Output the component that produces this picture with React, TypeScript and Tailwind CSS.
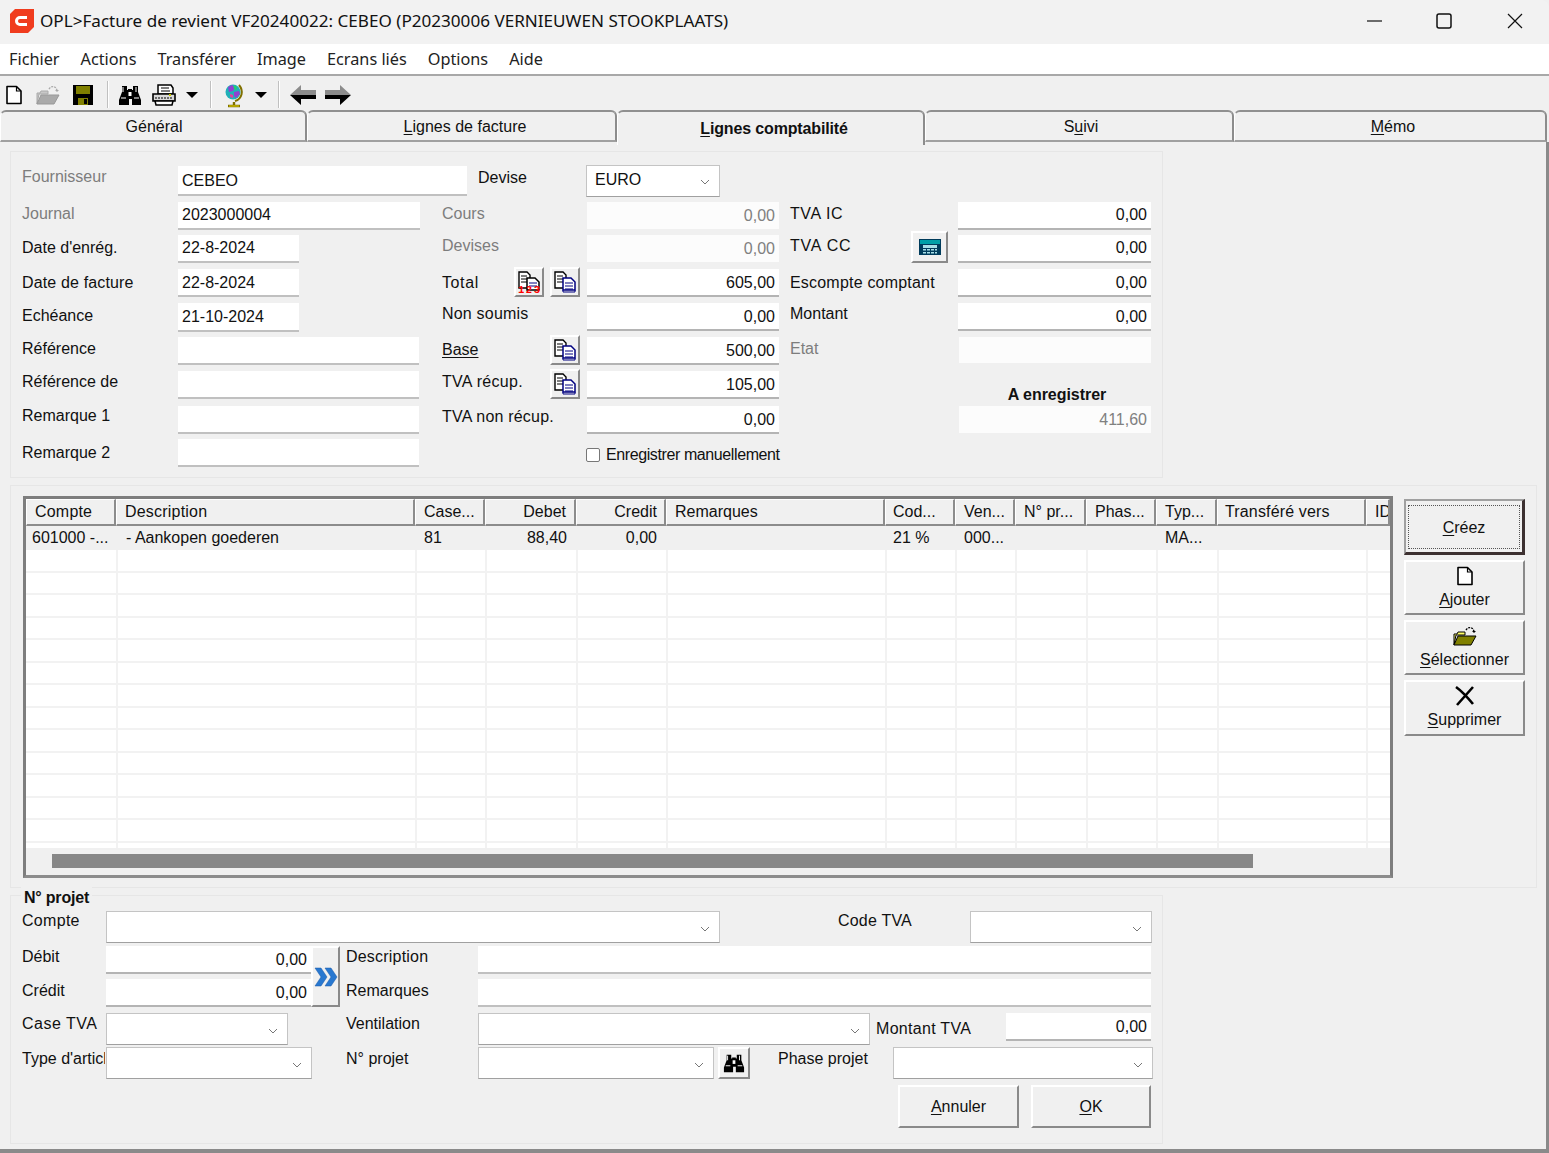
import React from 'react';

const raised = 'border-t-2 border-l-2 border-r-2 border-b-2 border-t-white border-l-white border-r-[#8a8a8a] border-b-[#8a8a8a] bg-[#f0f0f0]';

function U({ children }: { children: React.ReactNode }) {
  return <span className="underline underline-offset-2">{children}</span>;
}

function Input({ value, className = '', disabled }: { value?: string; className?: string; disabled?: boolean }) {
  return (
    <div className={`flex items-center justify-end px-1 shrink-0 ${disabled ? 'bg-[#fcfcfc] text-[#808080]' : 'bg-white border-b-2 border-b-[#b4b4b4]'} ${className}`}>
      {value}
    </div>
  );
}

function TextInput({ value, className = '' }: { value?: string; className?: string }) {
  return <div className={`flex items-center pl-1 bg-white border-b-2 border-b-[#c0c0c0] shrink-0 ${className}`}>{value}</div>;
}

function Combo({ value, className = '' }: { value?: string; className?: string }) {
  return (
    <div className={`flex items-center justify-between bg-white border border-[#c4c4c4] border-b-[#a0a0a0] pl-2 pr-[9px] shrink-0 ${className}`}>
      <span>{value}</span>
      <svg width="10" height="6" viewBox="0 0 10 6" className="mt-1"><path d="M1 1l4 4 4-4" fill="none" stroke="#777" strokeWidth="1" /></svg>
    </div>
  );
}

function Label({ children, className = '', muted }: { children: React.ReactNode; className?: string; muted?: boolean }) {
  return <div className={`shrink-0 leading-[24px] ${muted ? 'text-[#7d7d7d]' : ''} ${className}`}>{children}</div>;
}

function NewDoc({ size = 20 }: { size?: number }) {
  return (
    <svg width={size} height={size} viewBox="0 0 20 20">
      <path d="M3 1.5h9.5l4.5 4.5v12.5H3z" fill="#fff" stroke="#000" strokeWidth="1.6" strokeLinejoin="round" />
      <path d="M12.5 1.5V6H17" fill="none" stroke="#000" strokeWidth="1.2" />
    </svg>
  );
}

function OpenFolder({ active }: { active?: boolean }) {
  return (
    <svg width="26" height="22" viewBox="0 0 26 22">
      <path d="M2 9h3l1-2h7v3h-9L2 20z" fill={active ? '#ffff66' : '#c8c8c8'} stroke={active ? '#000' : '#aaa'} strokeWidth="1" />
      <path d="M2 20l4-9h18l-5 9z" fill={active ? '#808000' : '#aaaaaa'} stroke={active ? '#000' : '#999'} strokeWidth="1" />
      <path d="M14 5c2-3 5-3 7-1l1 2" fill="none" stroke={active ? '#000' : '#aaa'} strokeWidth="1.4" strokeDasharray="2 1" />
      <path d="M20 6h4l-2 2z" fill={active ? '#000' : '#aaa'} />
    </svg>
  );
}

function Floppy() {
  return (
    <svg width="22" height="22" viewBox="0 0 22 22">
      <path d="M1 1h20v20H1z" fill="#000" />
      <path d="M4 2h14v8H4z" fill="#808000" />
      <path d="M6 14h10v7H6z" fill="#808000" />
      <path d="M12 15h3v5h-3z" fill="#000" />
    </svg>
  );
}

function Binoculars({ size = 24 }: { size?: number }) {
  return (
    <svg width={size} height={size} viewBox="0 0 24 24">
      <path d="M4 3h5v4h1v-1h4v1h1V3h5v6l3 8v5h-9v-6h-3v6H1v-5l3-8z" fill="#000" />
      <path d="M5 4v5M18 4v5M3 15h5M16 15h5" stroke="#fff" strokeWidth="1" />
      <path d="M10.5 9h3v4h-3z" fill="#fff" />
    </svg>
  );
}

function Printer() {
  return (
    <svg width="26" height="24" viewBox="0 0 26 24">
      <path d="M7 2h13l2 3v6H7z" fill="#fff" stroke="#000" strokeWidth="1.5" />
      <path d="M10 5h8M10 8h9" stroke="#000" strokeWidth="1.2" />
      <path d="M2 11h22v7H2z" fill="#d8d8d8" stroke="#000" strokeWidth="1.6" />
      <path d="M4 15h18" stroke="#000" strokeWidth="1.2" strokeDasharray="2 1" />
      <path d="M4 18h18l-1 4H5z" fill="#fff" stroke="#000" strokeWidth="1.5" />
      <path d="M18 12h2" stroke="#c8c800" strokeWidth="2" />
    </svg>
  );
}

function Caret() {
  return <svg width="12" height="6" viewBox="0 0 12 6"><path d="M0 0h12L6 6z" fill="#000" /></svg>;
}

function Globe() {
  return (
    <svg width="20" height="26" viewBox="0 0 20 26">
      <path d="M15 3c5 6 3 14-4 16" fill="none" stroke="#807000" strokeWidth="2" />
      <path d="M10 20v3M4 24h12" stroke="#807000" strokeWidth="2.4" />
      <path d="M5 24h10" stroke="#e8d800" strokeWidth="1" />
      <circle cx="9" cy="10" r="7.5" fill="#20b0b8" />
      <path d="M4 5l4-2 3 2-2 4-4 1zM10 10l5-1 1 3-4 4-2-2z" fill="#9040d0" />
      <path d="M6 12l3 1 0 3-3-1z" fill="#e040a0" />
      <path d="M9 4l3 0 1 3-2 1z" fill="#20d070" />
    </svg>
  );
}

function Arrow({ flip }: { flip?: boolean }) {
  return (
    <svg width="26" height="22" viewBox="0 0 26 22" className={flip ? '-scale-x-100' : ''}>
      <path d="M0 11L11 1v5h15v5z" fill="#8c8c8c" />
      <path d="M0 11L11 21v-6h15v-4z" fill="#000" />
    </svg>
  );
}

function Sep({ className = '' }: { className?: string }) {
  return <div className={`w-[2px] h-[27px] bg-[#c0c0c0] border-r border-white shrink-0 ${className}`} />;
}

function CopyIcon({ numbers }: { numbers?: boolean }) {
  return (
    <svg width="24" height="24" viewBox="0 0 24 24">
      <path d="M2 2h8l3 3v13H2z" fill="#fff" stroke="#000" strokeWidth="1.4" />
      <path d="M4 6h6M4 9h6M4 12h6" stroke="#000" strokeWidth="1" />
      <path d="M10 8h8l4 4v8H10z" fill="#fff" stroke={numbers ? '#000' : '#000080'} strokeWidth="1.5" />
      <path d="M12 13h8M12 16h8" stroke="#000080" strokeWidth="1" />
      {numbers
        ? <text x="1" y="23" fontSize="10.500" fontWeight="700" fill="#ff0000" fontFamily="'Liberation Mono', monospace" textLength="22" lengthAdjust="spacing">123</text>
        : <path d="M10 20v2h12v-2M12 19h8" fill="none" stroke="#000080" strokeWidth="1" />}
    </svg>
  );
}

function IconButton({ children, className = '' }: { children: React.ReactNode; className?: string }) {
  return <div className={`flex items-center justify-center shrink-0 ${raised} ${className}`}>{children}</div>;
}

function Calculator() {
  return (
    <svg width="24" height="18" viewBox="0 0 24 18">
      <path d="M1 1h22v16H1z" fill="#003c5c" />
      <path d="M2 2h20v4H2z" fill="#00a0a8" />
      <path d="M5 7h14v3H5z" fill="#a8e0e8" />
      <path d="M5 11h3v1.500H5zM9 11h3v1.500H9zM13 11h3v1.500h-3zM17 11h2v1.500h-2zM5 14h3v1.500H5zM9 14h3v1.500H9zM13 14h3v1.500h-3zM17 14h2v1.500h-2z" fill="#a8e0e8" />
    </svg>
  );
}

function SideButton({ icon, label, className = '' }: { icon?: React.ReactNode; label: React.ReactNode; className?: string }) {
  return (
    <div className={`flex flex-col items-center justify-center w-[121px] pt-[2px] shrink-0 ${raised} ${className}`}>
      {icon && <div className="h-[22px] -mt-[1px] flex items-center justify-center">{icon}</div>}
      <div className="leading-[24px] mt-[1px]">{label}</div>
    </div>
  );
}

const cols = [
  { w: 'w-[90px]', t: 'Compte', c: '601000 -...', cell: 'pl-[4px]', head: 'pl-[8px] tracking-[0.2px]' },
  { w: 'w-[299px]', t: 'Description', c: '- Aankopen goederen', cell: 'pl-[8px]', head: 'pl-[8px] tracking-[0.2px]' },
  { w: 'w-[70px]', t: 'Case...', c: '81', cell: 'pl-[7px]', head: 'pl-[8px]' },
  { w: 'w-[91px]', t: 'Debet', c: '88,40', cell: 'text-right pr-[11px]', head: 'text-right pr-[8px]' },
  { w: 'w-[90px]', t: 'Credit', c: '0,00', cell: 'text-right pr-[11px]', head: 'text-right pr-[7px]' },
  { w: 'w-[219px]', t: 'Remarques', c: '', cell: '', head: 'pl-[8px]' },
  { w: 'w-[70px]', t: 'Cod...', c: '21 %', cell: 'pl-[6px]', head: 'pl-[7px]' },
  { w: 'w-[60px]', t: 'Ven...', c: '000...', cell: 'pl-[7px]', head: 'pl-[8px]' },
  { w: 'w-[71px]', t: 'N° pr...', c: '', cell: '', head: 'pl-[8px]' },
  { w: 'w-[70px]', t: 'Phas...', c: '', cell: '', head: 'pl-[8px]' },
  { w: 'w-[61px]', t: 'Typ...', c: 'MA...', cell: 'pl-[7px]', head: 'pl-[8px]' },
  { w: 'w-[149px]', t: 'Transféré vers', c: '', cell: '', head: 'pl-[7px] tracking-[0.15px]' },
  { w: 'w-[24px]', t: 'ID', c: '', cell: '', head: 'pl-[8px]' },
];

const tabs = [
  { k: 'g', w: 'w-[307px]', pad: 'pl-[2px] pt-[1px]', label: <>Général</> },
  { k: 'l', w: 'w-[310px]', pad: 'pl-[7px] pt-[1px]', label: <><U>L</U>ignes de facture</> },
  { k: 'c', w: 'w-[308px]', pad: 'pl-[7px]', label: <><U>L</U>ignes comptabilité</>, active: true },
  { k: 's', w: 'w-[309px]', pad: 'pl-[4px] pt-[1px]', label: <>S<U>u</U>ivi</> },
  { k: 'm', w: 'w-[313px]', pad: 'pl-[6px] pt-[1px]', label: <><U>M</U>émo</> },
];

const emptyRows = Array.from({ length: 13 }, (_, i) => i);

export default function App() {
  return (
    <div className="w-[1549px] h-[1153px] overflow-hidden bg-[#f0f0f0] text-[16px] text-[#111] font-['Liberation_Sans',Arial,sans-serif] flex flex-col">
      {/* title bar */}
      <div className="h-[44px] shrink-0 flex items-center pb-[2px] bg-[#f2f2f2] rounded-tr-[8px] font-['Noto_Sans',sans-serif] text-[17.1px]">
        <svg width="24" height="24" viewBox="0 0 24 24" className="ml-[10px] mr-[6px] shrink-0">
          <path d="M5 0h19v18l-6 6H0V5z" fill="#f03c1e" />
          <path d="M17 8.500H10a3.500 3.500 0 000 7h7" fill="none" stroke="#fff" strokeWidth="3" />
        </svg>
        <span className="whitespace-nowrap">OPL&gt;Facture de revient VF20240022: CEBEO (P20230006 VERNIEUWEN STOOKPLAATS)</span>
        <div className="ml-auto flex items-center">
          <svg width="16" height="16" viewBox="0 0 16 16" className="mr-[53px]"><path d="M0 8h15" stroke="#111" strokeWidth="1.2" /></svg>
          <svg width="16" height="16" viewBox="0 0 16 16" className="mr-[55px]"><rect x="1" y="1" width="14" height="14" rx="2" fill="none" stroke="#111" strokeWidth="1.5" /></svg>
          <svg width="16" height="16" viewBox="0 0 16 16" className="mr-[26px]"><path d="M1 1l14 14M15 1L1 15" stroke="#111" strokeWidth="1.2" /></svg>
        </div>
      </div>

      {/* menu */}
      <div className="h-[32px] shrink-0 bg-white border-b-2 border-b-[#a8a8a8] flex items-center pt-[1px] pl-[9px] gap-[21px] font-['Noto_Sans',sans-serif] text-[16.25px] text-[#222]">
        {['Fichier', 'Actions', 'Transférer', 'Image', 'Ecrans liés', 'Options', 'Aide'].map(m => <span key={m}>{m}</span>)}
      </div>

      {/* toolbar */}
      <div className="h-[34px] shrink-0 flex items-center pt-[3px]">
        <div className="ml-[4px]"><NewDoc /></div>
        <div className="ml-[11px]"><OpenFolder /></div>
        <div className="ml-[11px]"><Floppy /></div>
        <Sep className="ml-[13px]" />
        <div className="ml-[9px]"><Binoculars /></div>
        <div className="ml-[9px]"><Printer /></div>
        <div className="ml-[9px]"><Caret /></div>
        <Sep className="ml-[12px]" />
        <div className="ml-[12px]"><Globe /></div>
        <div className="ml-[11px]"><Caret /></div>
        <Sep className="ml-[11px]" />
        <div className="ml-[10px]"><Arrow /></div>
        <div className="ml-[9px]"><Arrow flip /></div>
      </div>

      {/* tabs */}
      <div className="h-[35px] shrink-0 flex items-start -mb-[3px] relative z-10">
        {tabs.map(t => (
          <div
            key={t.k}
            className={`${t.w} ${t.pad} shrink-0 flex items-center justify-center border-t-2 border-t-[#909090] border-r-2 border-r-[#8c8c8c] border-l border-l-white rounded-t-[6px] ${t.active ? 'h-[35px] font-bold bg-[#f0f0f0] pt-[1px] tracking-[-0.15px]' : 'h-[32px] border-b-2 border-b-[#a0a0a0]'}`}
          >
            <span>{t.label}</span>
          </div>
        ))}
        <div className="flex-1" />
      </div>

      {/* page */}
      <div className="flex-1 flex flex-col border-r-[3px] border-r-[#8a8a8a] border-b-[4px] border-b-[#8a8a8a] pl-[10px] pr-[9px] pt-[9px] min-h-0">
        {/* upper form */}
        <div className="w-[1153px] h-[327px] shrink-0 border border-[#e6e6e6] pl-[11px] pt-[13px] flex flex-col">
          <div className="flex h-[37px]">
            <Label muted className="w-[156px]">Fournisseur</Label>
            <TextInput value="CEBEO" className="w-[289px] h-[30px] mt-[1px] pt-[2px]" />
            <Label className="w-[108px] ml-[11px] mt-[1px]">Devise</Label>
            <Combo value="EURO" className="w-[134px] h-[32px] pb-[2px]" />
          </div>
          <div className="flex h-[33px]">
            <Label muted className="w-[156px]">Journal</Label>
            <TextInput value="2023000004" className="w-[242px] h-[28px]" />
            <Label muted className="w-[145px] ml-[22px]">Cours</Label>
            <Input disabled value="0,00" className="w-[192px] h-[27px]" />
            <Label className="w-[168px] ml-[11px] tracking-[0.6px]">TVA IC</Label>
            <Input value="0,00" className="w-[193px] h-[28px]" />
          </div>
          <div className="flex h-[34px]">
            <Label className="w-[156px] mt-[1px]">Date d'enrég.</Label>
            <TextInput value="22-8-2024" className="w-[121px] h-[28px] border-b-0" />
            <Label muted className="w-[145px] ml-[143px] -mt-[1px]">Devises</Label>
            <Input disabled value="0,00" className="w-[192px] h-[27px]" />
            <Label className="w-[121px] ml-[11px] -mt-[1px] tracking-[0.8px]">TVA CC</Label>
            <IconButton className="w-[37px] h-[32px] -mt-[4px] mr-[10px]"><Calculator /></IconButton>
            <Input value="0,00" className="w-[193px] h-[28px]" />
          </div>
          <div className="flex h-[34px]">
            <Label className="w-[156px] mt-[2px] tracking-[0.15px]">Date de facture</Label>
            <TextInput value="22-8-2024" className="w-[121px] h-[28px] border-b-0 pt-[2px]" />
            <Label className="w-[72px] ml-[143px] mt-[2px] tracking-[0.6px]">Total</Label>
            <IconButton className="w-[30px] h-[30px] mr-[6px] -mt-[2px]"><CopyIcon numbers /></IconButton>
            <IconButton className="w-[30px] h-[30px] mr-[7px] -mt-[2px]"><CopyIcon /></IconButton>
            <Input value="605,00" className="w-[192px] h-[28px] pt-[2px]" />
            <Label className="w-[168px] ml-[11px] mt-[2px] tracking-[0.2px]">Escompte comptant</Label>
            <Input value="0,00" className="w-[193px] h-[28px] pt-[2px]" />
          </div>
          <div className="flex h-[34px]">
            <Label className="w-[156px] mt-[1px]">Echéance</Label>
            <TextInput value="21-10-2024" className="w-[121px] h-[29px] border-b-0" />
            <Label className="w-[145px] ml-[143px] -mt-[1px] tracking-[0.2px]">Non soumis</Label>
            <Input value="0,00" className="w-[192px] h-[28px] pt-[2px]" />
            <Label className="w-[168px] ml-[11px] -mt-[1px]">Montant</Label>
            <Input value="0,00" className="w-[193px] h-[28px] pt-[2px]" />
          </div>
          <div className="flex h-[34px]">
            <Label className="w-[156px]">Référence</Label>
            <TextInput className="w-[241px] h-[28px]" />
            <Label className="w-[108px] ml-[23px] mt-[1px]"><U>Base</U></Label>
            <IconButton className="w-[30px] h-[30px] mr-[7px] -mt-[2px]"><CopyIcon /></IconButton>
            <Input value="500,00" className="w-[192px] h-[28px] pt-[2px]" />
            <Label muted className="w-[169px] ml-[11px]">Etat</Label>
            <Input disabled className="w-[192px] h-[26px]" />
          </div>
          <div className="flex h-[35px]">
            <Label className="w-[156px] h-[28px] -mt-[1px] overflow-hidden">Référence de<br />réception</Label>
            <TextInput className="w-[241px] h-[28px]" />
            <Label className="w-[108px] ml-[23px] -mt-[1px] tracking-[0.3px]">TVA récup.</Label>
            <IconButton className="w-[30px] h-[30px] mr-[7px] -mt-[2px]"><CopyIcon /></IconButton>
            <Input value="105,00" className="w-[192px] h-[28px] pt-[2px]" />
            <div className="w-[192px] ml-[180px] mt-[12px] pl-[4px] text-center font-bold leading-[24px] shrink-0 tracking-[-0.05px]">A enregistrer</div>
          </div>
          <div className="flex h-[33px]">
            <Label className="w-[156px] -mt-[2px]">Remarque 1</Label>
            <TextInput className="w-[241px] h-[28px]" />
            <Label className="w-[145px] ml-[23px] -mt-[1px] tracking-[0.2px]">TVA non récup.</Label>
            <Input value="0,00" className="w-[192px] h-[28px] pt-[2px]" />
            <Input disabled value="411,60" className="w-[192px] h-[27px] ml-[180px]" />
          </div>
          <div className="flex h-[28px]">
            <Label className="w-[156px] mt-[2px]">Remarque 2</Label>
            <TextInput className="w-[241px] h-[28px]" />
            <div className="ml-[167px] flex items-center gap-[6px] h-[32px] shrink-0 whitespace-nowrap">
              <div className="w-[14px] h-[14px] rounded-[2px] border border-[#777] bg-white shrink-0" />
              <span className="tracking-[-0.4px]">Enregistrer manuellement</span>
            </div>
          </div>
        </div>

        {/* grid panel */}
        <div className="w-[1527px] h-[403px] shrink-0 mt-[7px] border border-[#e6e6e6] pl-[12px] pt-[10px] flex items-start">
          <div className="w-[1370px] h-[382px] shrink-0 border-[3px] border-[#7e7e7e] border-b-[#8c8c8c] flex flex-col overflow-hidden">
            <div className="flex h-[27px] shrink-0">
              {cols.map(c => (
                <div key={c.t} className={`${c.w} ${c.head} shrink-0 leading-[24px] whitespace-nowrap overflow-hidden border-t border-l border-t-white border-l-white border-r-2 border-b-2 border-r-[#8c8c8c] border-b-[#8c8c8c]`}>{c.t}</div>
              ))}
            </div>
            <div className="flex h-[24px] shrink-0 bg-[#f0f0f0] pl-[2px]">
              {cols.map(c => (
                <div key={c.t} className={`${c.w} ${c.cell} shrink-0 leading-[23px] whitespace-nowrap overflow-hidden`}>{c.c}</div>
              ))}
            </div>
            <div className="h-[298px] shrink-0 overflow-hidden bg-white">
              {emptyRows.map(r => (
                <div key={r} className="flex h-[22.500px] pl-[2px] border-b-2 border-b-[#f2f2f2]">
                  {cols.map(c => <div key={c.t} className={`${c.w} shrink-0 border-r-2 border-r-[#f2f2f2]`} />)}
                </div>
              ))}
              <div className="flex h-[6px] pl-[2px]">
                {cols.map(c => <div key={c.t} className={`${c.w} shrink-0 border-r-2 border-r-[#f2f2f2]`} />)}
              </div>
            </div>
            <div className="flex-1 bg-[#f0f0f0] pt-[6px] pl-[26px]">
              <div className="w-[1201px] h-[14px] bg-[#878787]" />
            </div>
          </div>
          <div className="ml-[11px] flex flex-col gap-[5px] pt-[3px]">
            <div className="w-[121px] h-[56px] shrink-0 flex items-center justify-center border-t-2 border-l-2 border-t-[#a0a0a0] border-l-[#a0a0a0] border-r-[3px] border-b-[3px] border-r-[#3c3030] border-b-[#3c3030] bg-[#f0f0f0]">
              <div className="w-[112px] h-[44px] pt-[2px] border border-dotted border-[#555] flex items-center justify-center"><span><U>C</U>réez</span></div>
            </div>
            <SideButton className="h-[55px]" icon={<NewDoc />} label={<><U>A</U>jouter</>} />
            <SideButton className="h-[55px]" icon={<OpenFolder active />} label={<><U>S</U>électionner</>} />
            <SideButton
              className="h-[56px]"
              icon={<svg width="22" height="22" viewBox="0 0 22 22"><path d="M2 2c7 5 12 11 17 17M19 2L3 20" fill="none" stroke="#000" strokeWidth="2.6" /></svg>}
              label={<><U>S</U>upprimer</>}
            />
          </div>
        </div>

        {/* bottom form */}
        <div className="w-[1153px] h-[249px] shrink-0 mt-[7px] border border-[#e6e6e6] pl-[11px] flex flex-col relative">
          <div className="absolute left-[10px] -top-[9px] px-[3px] bg-[#f0f0f0] font-bold leading-[22px] tracking-[-0.2px]">N° projet</div>
          <div className="flex h-[35px] mt-[15px] shrink-0">
            <Label className="w-[84px] -mt-[2px] tracking-[0.3px]">Compte</Label>
            <Combo className="w-[614px] h-[32px]" />
            <Label className="w-[132px] ml-[118px] -mt-[2px] tracking-[0.2px]">Code TVA</Label>
            <Combo className="w-[182px] h-[32px]" />
          </div>
          <div className="flex h-[67px] shrink-0">
            <div className="w-[289px] shrink-0 flex flex-col">
              <div className="flex h-[33px]">
                <Label className="w-[84px] -mt-[1px]">Débit</Label>
                <Input value="0,00" className="w-[205px] h-[28px] pt-[2px]" />
              </div>
              <div className="flex h-[34px]">
                <Label className="w-[84px]">Crédit</Label>
                <Input value="0,00" className="w-[205px] h-[28px] pt-[2px]" />
              </div>
            </div>
            <IconButton className="w-[29px] h-[61px]">
              <svg width="24" height="20" viewBox="0 0 24 20">
                <path d="M1 1h6l6 9-6 9H1l6-9zM11 1h6l6 9-6 9h-6l6-9z" fill="#2878d0" stroke="#1858a8" strokeWidth="0.5" />
              </svg>
            </IconButton>
            <div className="flex-1 flex flex-col ml-[6px]">
              <div className="flex h-[33px]">
                <Label className="w-[132px] -mt-[1px] tracking-[0.2px]">Description</Label>
                <TextInput className="w-[673px] h-[28px]" />
              </div>
              <div className="flex h-[34px]">
                <Label className="w-[132px]">Remarques</Label>
                <TextInput className="w-[673px] h-[28px]" />
              </div>
            </div>
          </div>
          <div className="flex h-[34px] shrink-0">
            <Label className="w-[84px] tracking-[0.5px] -mt-[1px]">Case TVA</Label>
            <Combo className="w-[182px] h-[32px]" />
            <Label className="w-[132px] ml-[58px] -mt-[1px]">Ventilation</Label>
            <Combo className="w-[392px] h-[32px]" />
            <Label className="w-[130px] ml-[6px] mt-[4px] tracking-[0.3px]">Montant TVA</Label>
            <Input value="0,00" className="w-[145px] h-[28px] pt-[2px]" />
          </div>
          <div className="flex h-[38px] shrink-0">
            <div className="w-[84px] shrink-0">
              <Label className="w-[83px] overflow-hidden whitespace-nowrap">Type d'article</Label>
            </div>
            <Combo className="w-[206px] h-[32px]" />
            <Label className="w-[132px] ml-[34px]">N° projet</Label>
            <Combo className="w-[236px] h-[32px]" />
            <IconButton className="w-[32px] h-[32px] ml-[4px]"><Binoculars size={22} /></IconButton>
            <Label className="w-[115px] ml-[28px]">Phase projet</Label>
            <Combo className="w-[260px] h-[32px]" />
          </div>
          <div className="flex h-[43px] shrink-0 ml-[876px] gap-[12px]">
            <div className={`w-[121px] h-[43px] flex items-center justify-center shrink-0 ${raised}`}><span><U>A</U>nnuler</span></div>
            <div className={`w-[120px] h-[43px] flex items-center justify-center shrink-0 ${raised}`}><span><U>O</U>K</span></div>
          </div>
        </div>
      </div>
    </div>
  );
}
